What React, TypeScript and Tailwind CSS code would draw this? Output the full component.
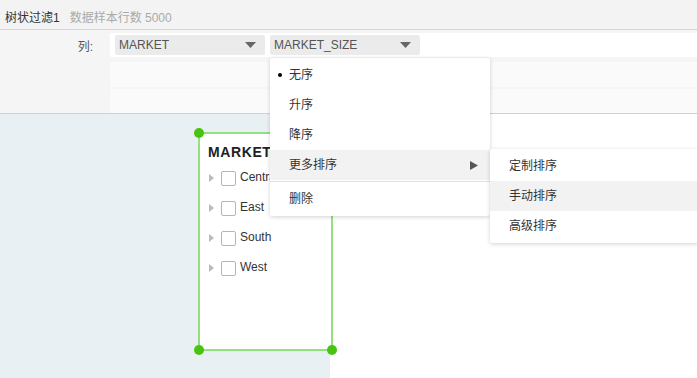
import { useState } from "react"

const FONT = "font-['Liberation_Sans','Noto_Sans_CJK_SC',sans-serif]"

const Caret = () => (
  <svg width="11" height="6" viewBox="0 0 11 6" className="shrink-0">
    <path d="M0 0 L11 0 L5.5 6 Z" fill="#666" />
  </svg>
)

const Select = ({ label, width }: { label: string; width: string }) => (
  <div className={`${width} h-[20px] bg-[#ebebeb] rounded-[2px] flex items-center justify-between pl-[4px] pr-[9px] text-[12px] text-[#555]`}>
    <span>{label}</span>
    <Caret />
  </div>
)

const Check = () => <span className="block w-[15px] h-[15px] rounded-[2px] border border-[#b5b5b5] bg-white shrink-0" />

const Dot = ({ pos }: { pos: string }) => (
  <span className={`absolute ${pos} w-[10px] h-[10px] rounded-full bg-[#47c40f]`} />
)

const App = () => {
  const [items] = useState(["Central", "East", "South", "West"])

  return (
    <div className={`${FONT} w-[697px] h-[378px] overflow-hidden relative bg-white text-[#333]`}>
      {/* header */}
      <div className="h-[30px] bg-[#f3f3f3] border-b border-[#d4d4d4] flex items-start pt-[10px] pl-[5px] text-[12px] leading-[16px]">
        <span className="text-[#333]">树状过滤1</span>
        <span className="ml-[10px] text-[#aaa]">数据样本行数 5000</span>
      </div>

      {/* column settings */}
      <div className="h-[84px] bg-[#f5f5f5] border-b border-[#d0d0d0] flex">
        <div className="w-[110px] shrink-0 flex justify-end pr-[17px] pt-[8px] text-[12px] text-[#555]">列:</div>
        <div className="flex-1 flex flex-col">
          <div className="mt-[3px] h-[24px] bg-white flex items-center gap-[5px] pl-[5px]">
            <Select label="MARKET" width="w-[150px]" />
            <Select label="MARKET_SIZE" width="w-[150px]" />
          </div>
          <div className="mt-[5px] h-[25px] bg-[#fafafa]" />
          <div className="mt-[2px] h-[24px] bg-[#fafafa]" />
        </div>
      </div>

      {/* canvas */}
      <div className="relative h-[264px] flex">
        <div className="w-[330px] bg-[#e9f0f4]" />
        <div className="flex-1 bg-white" />

        <div className="absolute left-[198px] top-[18px] w-[135px] h-[219px] border-2 border-[#94e07e] bg-white">
          <div className="pl-[8px] pt-[9px] text-[14px] font-bold text-[#222] tracking-[0.6px] leading-[18px]">MARKET</div>
          <div className="flex flex-col pl-[9px] pt-[2px]">
            {items.map((name) => (
              <div key={name} className="h-[30px] flex items-center">
                <svg width="5" height="8" viewBox="0 0 5 8" className="shrink-0">
                  <path d="M0 0 L5 4 L0 8 Z" fill="#bbb" />
                </svg>
                <span className="ml-[7px]"><Check /></span>
                <span className="ml-[4px] text-[12px] text-[#333] -translate-y-[1px]">{name}</span>
              </div>
            ))}
          </div>
          <Dot pos="-left-[6px] -top-[6px]" />
          <Dot pos="-right-[6px] -top-[6px]" />
          <Dot pos="-left-[6px] -bottom-[6px]" />
          <Dot pos="-right-[6px] -bottom-[6px]" />
        </div>
      </div>

      {/* dropdown menu */}
      <div className="absolute left-[270px] top-[58px] w-[220px] bg-white rounded-[2px] shadow-[0_1px_4px_rgba(0,0,0,0.18)] text-[12px] text-[#333] pt-[2px] pb-[1px]">
        <div className="h-[30px] flex items-center pl-[8px]">
          <span className="w-[4px] h-[4px] rounded-full bg-black mr-[7px]" />
          <span>无序</span>
        </div>
        <div className="h-[30px] flex items-center pl-[19px]">升序</div>
        <div className="h-[30px] flex items-center pl-[19px]">降序</div>
        <div className="h-[30px] flex items-center justify-between pl-[19px] pr-[12px] bg-[#f2f2f2]">
          <span>更多排序</span>
          <svg width="8" height="9" viewBox="0 0 8 9">
            <path d="M0 0 L8 4.5 L0 9 Z" fill="#555" />
          </svg>
        </div>
        <div className="mt-[1px] h-[1px] bg-[#e0e0e0]" />
        <div className="mt-[1px] h-[32px] flex items-center pl-[19px]">删除</div>
      </div>

      {/* submenu */}
      <div className="absolute left-[490px] top-[149px] w-[209px] bg-white rounded-[2px] shadow-[0_1px_4px_rgba(0,0,0,0.18)] text-[12px] text-[#333] pt-[2px] pb-[2px]">
        <div className="h-[30px] flex items-center pl-[19px]">定制排序</div>
        <div className="h-[30px] flex items-center pl-[19px] bg-[#f2f2f2]">手动排序</div>
        <div className="h-[30px] flex items-center pl-[19px]">高级排序</div>
      </div>
    </div>
  )
}

export default App
